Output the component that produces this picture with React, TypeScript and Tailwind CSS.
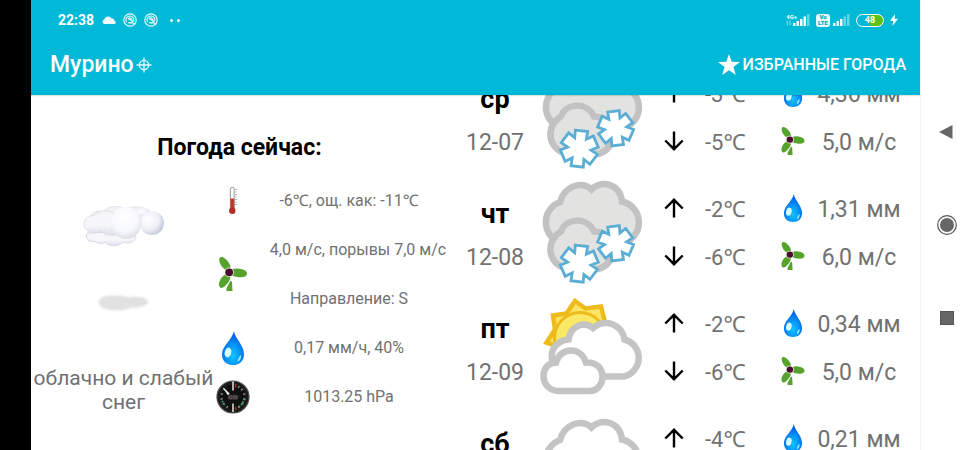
import React from "react";

const FONT = "font-['Roboto','Noto_Sans','Noto_Sans_CJK_SC',sans-serif]";

function Drop({ className }: { className: string }) {
  return (
    <svg viewBox="0 0 22 34" className={className} aria-hidden="true">
      <defs>
        <radialGradient id="dropFill" cx="0.5" cy="0.72" r="0.6">
          <stop offset="0" stopColor="#12c4ff" />
          <stop offset="0.45" stopColor="#079cf8" />
          <stop offset="1" stopColor="#0560e4" />
        </radialGradient>
      </defs>
      <path
        d="M12 0C12.6 7 22 14 22 23.4C22 30 17.200 34 11 34S0 30 0 23.400C0 14.500 9.500 10 12 0Z"
        fill="url(#dropFill)"
      />
      <ellipse cx="6" cy="21.500" rx="3.300" ry="5" fill="#d5fbff" transform="rotate(14 6 21.500)" />
      <path d="M19 24C19.300 28 17.500 30.500 15.600 30.600C15.600 28 17 25.500 19 24Z" fill="#9fe4ff" />
    </svg>
  );
}

function Fan({ className }: { className: string }) {
  return (
    <svg viewBox="0 0 28 34" className={className} aria-hidden="true">
      <g fill="#55a22c">
        <path d="M7.500 13.500C2.500 11 -0.500 5 0.400 1.500C1 -0.600 3.500 -0.600 6 1.600C10 5 12 8.500 11.500 12Z" />
        <path d="M13 12C18 10.600 24.500 11.600 27.200 14.600C29 17 27.600 19.400 24.500 20C21 20.600 16 20 13 18.200Z" />
        <path d="M7.500 16.800C2.800 19 -0.600 24.500 0.100 28.600C0.600 31.600 3 31.600 5.800 29.300C9.500 26 11.600 22.500 11.600 18.500Z" />
        <path d="M11.600 23.600L7.600 31L7.400 34H13.500L13 25Z" />
      </g>
      <circle cx="10.200" cy="15.300" r="4.800" fill="#eee9e4" />
      <circle cx="10.200" cy="15.300" r="3.900" fill="#4b0930" />
    </svg>
  );
}

function Thermometer() {
  return (
    <svg viewBox="1 1 12 28" className="h-7 w-3" aria-hidden="true">
      <path d="M4.400 3.200A1.900 1.900 0 0 1 8.200 3.200V22H4.400Z" fill="#fff" stroke="#8b8b8b" strokeWidth="0.900" />
      <rect x="4.400" y="12.500" width="3.800" height="12" fill="#c23a2b" />
      <circle cx="6.300" cy="24.800" r="3.200" fill="#b52e22" />
      <path d="M9.200 3.500h2M9.200 6h1.300M9.200 8.500h2M9.200 11h1.300M9.200 13.500h2M9.200 16h1.300M9.200 18.500h2" stroke="#a5a5a5" strokeWidth="0.900" />
    </svg>
  );
}

function Gauge() {
  const ticks = [-150, -125, -100, -75, -50, 30, 50, 75, 100, 125, 150];
  return (
    <svg viewBox="0 0 36 36" className="size-[34px]" aria-hidden="true">
      <circle cx="18" cy="18" r="17" fill="#1b1b1b" stroke="#555" strokeWidth="1.200" />
      <circle cx="18" cy="18" r="13" fill="#101010" />
      {ticks.map((a) => (
        <path key={a} d="M18 4.500V7" stroke="#bbb" strokeWidth="1" transform={`rotate(${a} 18 18)`} />
      ))}
      <path d="M6.500 22A12 12 0 0 0 10 27M29.800 19.500A12 12 0 0 1 24.500 28" fill="none" stroke="#2ea566" strokeWidth="1.600" strokeDasharray="2 1" />
      <path d="M18 1.500V11M18 25V34" stroke="#d8d8d8" strokeWidth="1.700" />
      <path d="M20.800 4.500V8M20.800 28.500V31.500" stroke="#d33" strokeWidth="1.300" />
      <path d="M14.200 14.500L8 8.500L12.500 15.500Z" fill="#fff" stroke="#fff" strokeWidth="0.700" />
      <rect x="12.500" y="15.500" width="11" height="5.500" rx="2" fill="#3a2f2f" />
      <path d="M14 17h3v2.500h-3zM19 17h3v2.500h-3z" fill="none" stroke="#777" strokeWidth="0.600" />
    </svg>
  );
}

function CloudPicture() {
  return (
    <svg viewBox="0 0 82 110" className="h-[110px] w-[82px]" role="img" aria-label="Облачно">
      <defs>
        <radialGradient id="puff" cx="0.45" cy="0.35" r="0.7">
          <stop offset="0" stopColor="#ffffff" />
          <stop offset="0.6" stopColor="#f7f8fb" />
          <stop offset="1" stopColor="#d6d8e4" />
        </radialGradient>
        <radialGradient id="puffRight" cx="0.35" cy="0.35" r="0.72">
          <stop offset="0" stopColor="#ffffff" />
          <stop offset="0.6" stopColor="#eef0f7" />
          <stop offset="1" stopColor="#bfc3d6" />
        </radialGradient>
        <linearGradient id="bank" x1="0" y1="0" x2="0" y2="1">
          <stop offset="0" stopColor="#f6f6f9" />
          <stop offset="0.6" stopColor="#f6f7fb" />
          <stop offset="1" stopColor="#dcdfec" />
        </linearGradient>
        <filter id="soft" x="-20%" y="-50%" width="140%" height="200%">
          <feGaussianBlur stdDeviation="1.300" />
        </filter>
      </defs>
      <path
        d="M4 28C2 34 6 38 12 36C15 39 20 39 22 37C26 42 35 42 40 37C44 39 50 38 53 33L50 26Z"
        fill="url(#bank)"
        stroke="#cfd1dd"
        strokeWidth="0.800"
      />
      <path
        d="M6 14C8 7 14 5 20 7C24 0.500 36 -0.500 42 5C50 0 62 1 66 7C74 6 79 12 79 18L40 22Z"
        fill="#f1f1f6"
        stroke="#dcdde6"
        strokeWidth="0.700"
      />
      <ellipse cx="60" cy="7.500" rx="7" ry="4.500" fill="url(#puffRight)" />
      <ellipse cx="69" cy="18" rx="12" ry="12" fill="url(#puffRight)" />
      <path
        d="M11 10.500C15 4.500 26 4.500 32 9L36 29C30 31 22 31 18 26C9 30 0.500 26 1 18.500C1.300 13.500 5 10.500 11 10.500Z"
        fill="url(#bank)"
        stroke="#d2d4df"
        strokeWidth="0.700"
      />
      <ellipse cx="43" cy="18" rx="15.500" ry="16" fill="url(#puff)" />
      <g filter="url(#soft)" fill="#e1e1e1">
        <ellipse cx="34" cy="98" rx="18" ry="7.500" />
        <ellipse cx="52" cy="97" rx="13" ry="5.500" />
        <ellipse cx="28" cy="96" rx="12" ry="5.500" />
      </g>
    </svg>
  );
}

const BIG_CLOUD =
  "M22 63A21.500 21.500 0 0 1 20 22C24 7 41 0 51.500 9.500C62 -1 80 4 82 21.500A21.500 21.500 0 0 1 82 63.500Z";

// Six blunt arms with a notch between each pair
function flakePoints(cx: number, cy: number, r: number, tilt: number) {
  const pts: string[] = [];
  for (let arm = 0; arm < 6; arm++) {
    for (const [offset, radius] of [[-19, r], [19, r], [30, r * 0.62]]) {
      const a = ((arm * 60 + offset + tilt - 90) * Math.PI) / 180;
      pts.push(`${(cx + radius * Math.cos(a)).toFixed(2)},${(cy + radius * Math.sin(a)).toFixed(2)}`);
    }
  }
  return pts.join(" ");
}

function SnowIcon() {
  return (
    <svg viewBox="1 1 104 106" className="h-[106px] w-[104px] overflow-visible" role="img" aria-label="Снег">
      <g fill="#e2e2e1" stroke="#c2c2c2" strokeWidth="6.500">
        <path d={BIG_CLOUD} />
        <path d="M28 89A20 20 0 0 1 21 51.500C26 37.500 47 36.500 54 51.500A19 19 0 0 1 58 89Z" />
      </g>
      <g fill="#fff" stroke="#5aaed6" strokeWidth="2.800">
        <polygon points={flakePoints(39.300, 83.600, 19, 7)} />
        <polygon points={flakePoints(75.600, 63.300, 18, -7)} />
      </g>
    </svg>
  );
}

function PartlyCloudyIcon() {
  return (
    <svg viewBox="1 2 104 106" className="h-[106px] w-[104px] overflow-visible" role="img" aria-label="Переменная облачность">
      <path
        d="M35 7L45.500 14.500L61 12.500L66 32L40 60L13.500 51L6.500 48.500L15 35.500L13 21.500L26.500 19.500Z"
        fill="#fbe564"
        stroke="#edbb1b"
        strokeWidth="4.500"
      />
      <circle cx="40" cy="44" r="25.500" fill="#fbe966" stroke="#edbb1b" strokeWidth="3" />
      <g fill="#fff" stroke="#c4c4c4" strokeWidth="6.500">
        <path d="M30 82.500C8 80 4 48 28.500 45.500C31 31 44 27 53 34C65 24 82 30 84.500 45.500A19 19 0 0 1 83.500 82.500Z" />
        <path d="M18 97C-1 96 -1 69 16 68.500C20 53 41 52 46 68.500C68 67 67 97 49 97Z" />
      </g>
    </svg>
  );
}

function CloudyIcon() {
  return (
    <svg viewBox="1 -7 104 106" className="h-[106px] w-[104px] overflow-visible" role="img" aria-label="Облачно">
      <path d={BIG_CLOUD} fill="#fff" stroke="#c4c4c4" strokeWidth="6.500" />
    </svg>
  );
}

function Arrow({ down = false }: { down?: boolean }) {
  return (
    <svg viewBox="0 0 20 20" className={down ? "size-5 rotate-180" : "size-5"} role="img" aria-label={down ? "мин" : "макс"}>
      <path d="M10 19.500V2M1.300 10.500L10 1.800L18.700 10.500" fill="none" stroke="#000" strokeWidth="2.400" />
    </svg>
  );
}

type Day = {
  day: string;
  date: string;
  max: string;
  min: string;
  rain: string;
  wind: string;
  icon: React.ReactNode;
};

const DAYS: Day[] = [
  { day: "ср", date: "12-07", max: "-3℃", min: "-5℃", rain: "4,36 мм", wind: "5,0 м/с", icon: <SnowIcon /> },
  { day: "чт", date: "12-08", max: "-2℃", min: "-6℃", rain: "1,31 мм", wind: "6,0 м/с", icon: <SnowIcon /> },
  { day: "пт", date: "12-09", max: "-2℃", min: "-6℃", rain: "0,34 мм", wind: "5,0 м/с", icon: <PartlyCloudyIcon /> },
  { day: "сб", date: "12-10", max: "-4℃", min: "-7℃", rain: "0,21 мм", wind: "4,0 м/с", icon: <CloudyIcon /> },
];

function DayRow({ day, date, max, min, rain, wind, icon }: Day) {
  return (
    <li className="grid h-[115px] shrink-0 grid-cols-[76fr_120fr_41fr_11fr_73fr_30fr_102fr] grid-rows-[48px_48px] content-center items-center text-[23px] leading-7 text-[#717171]">
      <b className="pt-2 text-center text-[27px] font-bold text-black">{day}</b>
      <div className="row-span-2 flex justify-center">{icon}</div>
      <div className="flex justify-center pb-1"><Arrow /></div>
      <span className="col-start-5 text-[22px]">{max}</span>
      <div className="flex justify-center pb-1"><Drop className="h-7 w-5" /></div>
      <span className="text-center">{rain}</span>
      <span className="col-start-1 text-center">{date}</span>
      <div className="col-start-3 flex justify-center pb-1"><Arrow down /></div>
      <span className="col-start-5 text-[22px]">{min}</span>
      <div className="flex justify-center pb-1"><Fan className="h-7 w-6" /></div>
      <span className="text-center">{wind}</span>
    </li>
  );
}

function Swirl() {
  return (
    <svg viewBox="0 0 14 14" className="size-3.5" fill="none" stroke="#eafafd" aria-hidden="true">
      <circle cx="7" cy="7" r="6.200" strokeWidth="1.200" />
      <path d="M3.600 9.200A4 4 0 1 1 10.600 8.600" strokeWidth="1.200" />
      <path d="M5 5.500L9.500 8.300L8 10L5.200 9.500M5 5.500C7 4 9 5.500 9 7.500M9.500 9.500L12 12" strokeWidth="1.300" />
    </svg>
  );
}

function Bars({ lit }: { lit: number }) {
  return (
    <svg viewBox="0 0 17 12" className="h-3 w-[17px]" aria-hidden="true">
      {[3, 5, 7, 9.500, 12].map((h, i) => (
        <rect key={h} x={i * 3.500} y={12 - h} width="2.500" height={h} fill="#fff" opacity={i < lit ? 0.95 : 0.4} />
      ))}
    </svg>
  );
}

function StatusBar() {
  return (
    <div className="flex h-10 items-center justify-between pr-[22px] pl-[27px] text-white">
      <div className="flex items-center">
        <time className="text-[14px] leading-4 font-bold">22:38</time>
        <svg viewBox="0 0 14 8" className="ml-2 h-2 w-3.5" fill="#f2fcfe" aria-hidden="true">
          <path d="M2.500 8A2.300 2.300 0 0 1 2.300 3.500C3 0.500 7.500 -1 9.300 2.300C11.500 2 12.300 3.500 12.100 4.500C14.300 5 14.200 8 12 8Z" />
        </svg>
        <span className="ml-[7px] flex gap-[7px]"><Swirl /><Swirl /></span>
        <span className="ml-3 flex gap-1">
          <i className="size-[3px] rounded-full bg-white" />
          <i className="size-[3px] rounded-full bg-white" />
        </span>
      </div>
      <div className="flex items-center">
        <span className="flex items-end">
          <span className="-mr-1 flex flex-col">
            <span className="text-[6px] leading-[6px] font-bold">4G+</span>
            <svg viewBox="0 0 6 6" className="size-1.5" fill="none" stroke="#fff" strokeWidth="0.800" opacity="0.600" aria-hidden="true">
              <path d="M1.500 6V1L0.300 2.500M4 0V5L5.500 3.500" />
            </svg>
          </span>
          <Bars lit={4} />
        </span>
        <span className="ml-1.5 flex h-[13px] w-3.5 flex-col items-center justify-center rounded-[3px] bg-[#eafafd] text-[6px] leading-[6px] font-black text-[#00a5c5]">
          <span>Vo</span>
          <span>LTE</span>
        </span>
        <span className="ml-[3px]"><Bars lit={3} /></span>
        <span className="ml-1.5 flex h-[13px] w-7 items-center justify-center rounded-full border border-white bg-linear-to-r from-transparent from-50% to-[#5cc20e] to-50% text-[9px] leading-[9px] font-bold">
          48
        </span>
        <svg viewBox="0 0 8 12" className="ml-1.5 h-3 w-2" fill="#fff" aria-hidden="true">
          <path d="M5 0L0 7H3.200L2.500 12L8 4.800H4.600Z" />
        </svg>
      </div>
    </div>
  );
}

function CurrentWeather() {
  return (
    <section className="w-[417px] shrink-0">
      <h2 className="mt-[38px] mb-3.5 text-center text-[23px] leading-[29px] font-bold text-black">Погода сейчас:</h2>
      <div className="grid grid-cols-[185px_34px_1fr] text-[#717171]">
        <div className="flex flex-col items-center pt-[29px]">
          <CloudPicture />
          <p className="mt-[51px] text-center text-[21px] leading-6">облачно и слабый снег</p>
        </div>
        <div className="grid grid-rows-[49px_98px_49px_49px] place-items-center">
          <Thermometer />
          <Fan className="h-[34px] w-7" />
          <Drop className="h-[34px] w-[22px]" />
          <Gauge />
        </div>
        <ul className="text-center text-[16px] leading-[49px] whitespace-nowrap">
          <li>-6℃, ощ. как: -11℃</li>
          <li className="pl-[18px]">4,0 м/с, порывы 7,0 м/с</li>
          <li>Направление: S</li>
          <li>0,17 мм/ч, 40%</li>
          <li>1013.25 hPa</li>
        </ul>
      </div>
    </section>
  );
}

function SystemNav() {
  return (
    <nav aria-label="Система" className="flex w-[54px] flex-col items-center border-l border-[#f6f6f6] bg-white pt-[125px] pr-0.5">
      <button aria-label="Назад" className="flex h-3.5 w-full justify-center">
        <svg viewBox="1 0 14 14" className="size-3.5 overflow-visible" fill="#666"><path d="M0 7L13.500 0V14Z" /></svg>
      </button>
      <button aria-label="Домой" className="mt-[76px] flex h-5 w-full justify-center">
        <svg viewBox="0 0 20 20" className="size-5">
          <circle cx="10" cy="10" r="9.300" fill="none" stroke="#555" strokeWidth="1.200" />
          <circle cx="10" cy="10" r="7" fill="#666" />
        </svg>
      </button>
      <button aria-label="Недавние" className="mt-[76px] flex h-3.5 w-full justify-center">
        <span className="size-3.5 border border-[#555] bg-[#666]" />
      </button>
    </nav>
  );
}

export default function App() {
  return (
    <div className={`flex h-screen overflow-hidden bg-white ${FONT}`}>
      <div className="w-[31px] shrink-0 bg-black" />
      <div className="flex min-w-0 flex-1 flex-col">
        <header className="z-10 bg-[#00b9d7] pb-[6px] shadow-[0_1px_1px_rgba(0,0,0,0.12)]">
          <StatusBar />
          <div className="flex h-[49px] items-center justify-between pr-3.5 pl-[19px] text-white">
            <h1 className="flex items-center gap-0.5 text-[23px] leading-7 font-medium">
              Мурино
              <svg viewBox="0 0 16 16" className="size-4" fill="none" stroke="#e6fafd" strokeWidth="1.300" aria-hidden="true">
                <circle cx="8" cy="8" r="4.600" />
                <path d="M8 0.500V15.500M0.500 8H15.500" />
              </svg>
            </h1>
            <button className="flex items-center gap-[3px] text-[16px] leading-5 font-medium">
              <svg viewBox="0 0 22 21" className="h-[21px] w-[22px]" fill="#fff" aria-hidden="true">
                <path d="M11 0L13.700 7.800L22 8L15.400 13L17.800 21L11 16.200L4.200 21L6.600 13L0 8L8.300 7.800Z" />
              </svg>
              ИЗБРАННЫЕ ГОРОДА
            </button>
          </div>
        </header>
        <main className="flex min-h-0 flex-1 overflow-hidden">
          <CurrentWeather />
          <ul className="-mt-[34px] flex min-w-0 flex-1 flex-col pr-2.5 pl-[9px]">
            {DAYS.map((d) => (
              <DayRow key={d.date} {...d} />
            ))}
          </ul>
        </main>
      </div>
      <SystemNav />
    </div>
  );
}
